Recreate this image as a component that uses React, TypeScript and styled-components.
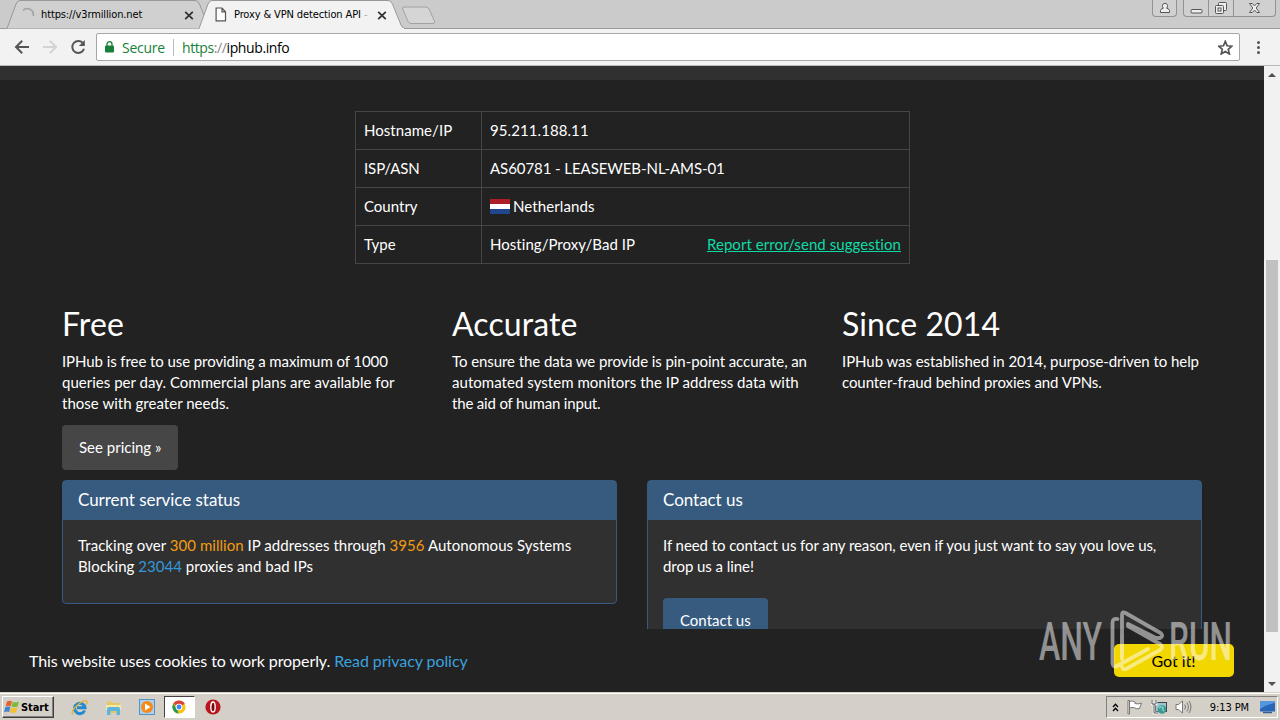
import type { ReactNode } from 'react';
import styled, { createGlobalStyle } from 'styled-components';

const uiFont = "'DejaVu Sans Condensed', 'DejaVu Sans', sans-serif";

const GlobalStyle = createGlobalStyle`
  * {
    box-sizing: border-box;
  }

  body {
    margin: 0;
    overflow: hidden;
  }

  svg {
    display: block;
    flex: none;
  }
`;

const Desktop = styled.div`
  position: relative;
  display: flex;
  flex-direction: column;
  width: 1280px;
  height: 720px;
  overflow: hidden;
  background: #222;
`;

/* browser chrome */

const TabStrip = styled.div`
  display: flex;
  height: 29px;
  padding-left: 7px;
  background: #cbcbcb;
  border-bottom: 1px solid #9b9b9b;
`;

const StyledTab = styled.div<{ $active?: boolean }>`
  position: relative;
  z-index: ${(p) => (p.$active ? 2 : 1)};
  display: flex;
  align-items: center;
  width: ${(p) => (p.$active ? 206 : 200)}px;
  height: 29px;
  margin-right: ${(p) => (p.$active ? -4 : -8)}px;
  padding: 0 ${(p) => (p.$active ? '18px 0 15px' : '13px 0 13px')};
  font: 11px ${uiFont};
  letter-spacing: -0.12px;
  color: #000;

  .shape {
    position: absolute;
    left: 0;
    top: 0;
    z-index: -1;
  }

  .title {
    flex: 1;
    margin-left: 6px;
    overflow: hidden;
    white-space: nowrap;
  }

  .fade {
    color: #aaa;
  }
`;

const NewTab = styled.div`
  padding-top: 6px;
`;

const WindowControls = styled.div`
  display: flex;
  gap: 6px;
  height: 17px;
  margin-left: auto;
  padding-right: 4px;
`;

const ControlGroup = styled.div`
  display: flex;
  border: 1px solid #929292;
  border-top: 0;
  border-radius: 0 0 4px 4px;
  background: #d0d0d0;
`;

const Control = styled.div<{ $width: number }>`
  display: flex;
  align-items: center;
  justify-content: center;
  width: ${(p) => p.$width}px;

  & + & {
    border-left: 1px solid #929292;
  }
`;

const Toolbar = styled.div`
  display: flex;
  align-items: center;
  height: 37px;
  padding: 0 14px;
  background: #f2f2f2;
  border-bottom: 1px solid #b9b9b9;
`;

const NavButtons = styled.div`
  display: flex;
  gap: 12px;
  width: 82px;
`;

const AddressBar = styled.div`
  display: flex;
  align-items: center;
  width: 1144px;
  height: 28px;
  padding: 0 6px 0 8px;
  border: 1px solid #a6a6a6;
  border-radius: 2px;
  background: #fff;
  font: 14px 'Open Sans', sans-serif;
  color: #000;

  .secure {
    width: 52px;
    margin-left: 8px;
    letter-spacing: -0.25px;
    color: #188038;
    border-right: 1px solid #bbb;
    line-height: 17px;
  }

  .url {
    flex: 1;
    margin-left: 8px;
    letter-spacing: -0.4px;
  }

  .scheme {
    color: #188038;
  }

  .slashes {
    color: #888;
  }
`;

const MenuDots = styled.div`
  display: flex;
  flex-direction: column;
  gap: 2px;
  margin-left: 17px;

  i {
    width: 3px;
    height: 3px;
    border-radius: 50%;
    background: #555;
  }
`;

const Viewport = styled.div`
  position: relative;
  display: flex;
  height: 626px;
`;

const Scrollbar = styled.div`
  display: flex;
  flex-direction: column;
  align-items: center;
  width: 16px;
  background: #f1f1f1;

  .arrow {
    display: flex;
    align-items: center;
    height: 17px;
  }

  .thumb {
    width: 12px;
    height: 372px;
    margin: 177px 0 auto;
    background: #c1c1c1;
  }
`;

/* page */

const Page = styled.main`
  width: 1264px;
  overflow: hidden;
  background: #222;
  font: 15px/21px Lato, sans-serif;
  font-variant-ligatures: none;
  color: #fff;
`;

const NavbarEdge = styled.div`
  height: 14px;
  background: #303030;
`;

const InfoTable = styled.table`
  width: 555px;
  margin: 31px 0 0 355px;
  border-collapse: collapse;
  table-layout: fixed;

  td {
    height: 38px;
    padding: 8px;
    border: 1px solid #464646;
  }

  td:first-child {
    width: 126px;
  }

  .value {
    display: flex;
    align-items: center;
  }

  a {
    margin-left: auto;
    color: #0edba6;
    letter-spacing: 0.07px;
    text-decoration: underline;
  }
`;

const Flag = styled.span`
  width: 20px;
  height: 15px;
  margin-right: 3px;
  background: linear-gradient(#ae1c28 33.3%, #fff 33.3% 66.6%, #21468b 66.6%);
`;

const Line = styled.span<{ $tracking?: number }>`
  display: block;
  white-space: nowrap;
  letter-spacing: ${(p) => p.$tracking ?? 0}px;
`;

const Columns = styled.div`
  display: grid;
  grid-template-columns: repeat(3, 360px);
  gap: 30px;
  height: 173px;
  margin: 43px 0 0 62px;
`;

const Feature = styled.section`
  h2 {
    margin: 0 0 11px;
    font-size: 32px;
    font-weight: 400;
    line-height: 33px;
    letter-spacing: 0.1px;
  }

  p {
    margin: 0 0 11px;
  }
`;

const Button = styled.a<{ $primary?: boolean }>`
  display: inline-block;
  height: 45px;
  padding: 12px 17px;
  border-radius: 4px;
  background: ${(p) => (p.$primary ? '#375a7f' : '#464646')};
  white-space: nowrap;
`;

const Panels = styled.div`
  display: grid;
  grid-template-columns: repeat(2, 555px);
  gap: 30px;
  align-items: start;
  margin-left: 62px;
`;

const StyledPanel = styled.section`
  border: 1px solid #375a7f;
  border-radius: 4px;
  background: #303030;

  h3 {
    height: 39px;
    margin: 0;
    padding: 0 15px;
    background: #375a7f;
    font-size: 17px;
    font-weight: 400;
    line-height: 38px;
    letter-spacing: -0.04px;
  }

  .panel-body {
    padding: 15px;
  }

  p {
    margin: 0 0 21px;
  }

  .status {
    margin-bottom: 11px;
  }
`;

const Count = styled.span<{ $tone: 'warning' | 'info' }>`
  color: ${(p) => (p.$tone === 'warning' ? '#f39c12' : '#3498db')};
`;

const CookieBar = styled.div`
  position: absolute;
  left: 0;
  bottom: 0;
  display: flex;
  align-items: center;
  justify-content: space-between;
  width: 1264px;
  height: 63px;
  padding: 0 30px 0 29px;
  background: #222;
  font: 16px/24px Lato, sans-serif;
  font-variant-ligatures: none;
  letter-spacing: -0.07px;
  color: #fff;

  span {
    padding-top: 1px;
  }

  a {
    color: #3ba1de;
  }

  button {
    width: 120px;
    height: 33px;
    padding: 0 1px 0 0;
    border: 0;
    border-radius: 5px;
    background: #f1d600;
    font: inherit;
    color: #000;
  }
`;

const Watermark = styled.svg`
  position: absolute;
  left: 1036px;
  top: 606px;
  z-index: 5;
  overflow: visible;
  font-family: Roboto, sans-serif;
  font-weight: 500;
  pointer-events: none;
`;

/* taskbar */

const Taskbar = styled.footer`
  display: flex;
  align-items: center;
  height: 28px;
  padding: 1px 2px 0;
  border-top: 1px solid #d4d0c8;
  box-shadow: inset 0 1px #fff;
  background: #d4d0c8;
  font: 11px ${uiFont};
  color: #000;
`;

const StartButton = styled.div`
  display: flex;
  align-items: center;
  gap: 1px;
  width: 52px;
  height: 22px;
  padding-left: 1px;
  border: 1px solid;
  border-color: #fff #404040 #404040 #fff;
  box-shadow: inset -1px -1px #808080;
  font-weight: 700;
  letter-spacing: -0.1px;
`;

const QuickLaunch = styled.div`
  display: flex;
  align-items: center;
  margin-left: 9px;
`;

const LaunchItem = styled.div<{ $open?: boolean }>`
  display: flex;
  align-items: center;
  justify-content: center;
  width: ${(p) => (p.$open ? 31 : 33.5)}px;
  height: 22px;
  margin-right: ${(p) => (p.$open ? 2 : 0)}px;
  border: 1px solid;
  border-color: ${(p) => (p.$open ? '#404040 #fff #fff #404040' : 'transparent')};
  background: ${(p) => (p.$open ? '#fff' : 'none')};
`;

const Tray = styled.div`
  display: flex;
  align-items: center;
  gap: 8px;
  width: 172px;
  height: 22px;
  margin-left: auto;
  padding: 0 1px 0 5px;
  border: 1px solid;
  border-color: #808080 #fff #fff #808080;

  .clock {
    margin: 0 2px 0 auto;
    letter-spacing: -0.1px;
  }
`;

const CloseIcon = () => (
  <svg width="10" height="10" viewBox="0 0 10 10" stroke="#333" strokeWidth="1.8">
    <path d="M1.2 1.8 8.8 9.2M8.8 1.8 1.2 9.2" />
  </svg>
);

function Tab(props: { active?: boolean; icon: ReactNode; title: string; faded?: string }) {
  const path = props.active
    ? 'M0 28.5 L9 4 Q10.5 .5 13 .5 H189 Q192 .5 193.5 4 L202 25 Q203.5 28.5 206 28.5'
    : 'M0 28.5 L9 4 Q10.5 .5 13 .5 H188 Q191 .5 192.5 4 L202 28.5';
  return (
    <StyledTab $active={props.active}>
      <svg className="shape" width="207" height="29">
        <path d={path} fill={props.active ? '#f2f2f2' : '#d0d0d0'} stroke="#999" />
        {props.active && <path d="M1 28.5 H205" stroke="#f2f2f2" />}
      </svg>
      {props.icon}
      <span className="title">
        {props.title}
        {props.faded && <span className="fade"> {props.faded}</span>}
      </span>
      <CloseIcon />
    </StyledTab>
  );
}

function Panel(props: { title: string; children: ReactNode }) {
  return (
    <StyledPanel>
      <h3>{props.title}</h3>
      <div className="panel-body">{props.children}</div>
    </StyledPanel>
  );
}

const Spinner = () => (
  <svg width="15" height="15" viewBox="0 0 15 15" fill="none" stroke="#a2a2a2" strokeWidth="1.6">
    <path d="M3 3.5 A6 6 0 0 1 13.2 9" />
  </svg>
);

const PageIcon = () => (
  <svg width="14" height="15" viewBox="-.5 0 14 15" fill="#fff" stroke="#555" strokeWidth="1.2">
    <path d="M1.6 1 H7.5 L11 4.8 V13.8 H1.6Z M7.5 1 V4.8 H11" />
  </svg>
);

function BrowserBar() {
  return (
    <>
      <TabStrip>
        <Tab icon={<Spinner />} title="https://v3rmillion.net" />
        <Tab active icon={<PageIcon />} title="Proxy &amp; VPN detection API" faded="-" />
        <NewTab>
          <svg width="36" height="20" viewBox="0 0 36 20" fill="#d5d5d5" stroke="#a2a2a2">
            <path d="M3 1 H25 Q27 1 28 3 L33.5 15 Q34.3 17.5 32 17.5 H10 Q8 17.5 7 15.5 L1.7 3 Q1 1 3 1Z" />
          </svg>
        </NewTab>
        <WindowControls>
          <ControlGroup>
            <Control $width={23}>
              <svg width="12" height="12" viewBox="0 0 12 12" fill="#eee" stroke="#555">
                <path d="M1.5 10.5 V8.5 Q2 6.5 4.4 6.2 Q3.2 5 3.5 3.3 Q4 1.3 6 1.3 Q8 1.3 8.5 3.3 Q8.8 5 7.6 6.2 Q10 6.5 10.5 8.5 V10.5Z" />
              </svg>
            </Control>
          </ControlGroup>
          <ControlGroup>
            <Control $width={24}>
              <svg width="13" height="12" viewBox="0 0 13 12" fill="#eee" stroke="#555">
                <rect x="1" y="7.5" width="11" height="3.5" rx="1" />
              </svg>
            </Control>
            <Control $width={25}>
              <svg width="14" height="14" viewBox="0 0 14 14" fill="#eee" stroke="#555">
                <rect x="4.5" y="1.5" width="8" height="8" rx="1" />
                <rect x="1.5" y="4.5" width="8" height="8" rx="1" />
                <rect x="4" y="7" width="3" height="3" />
              </svg>
            </Control>
            <Control $width={42}>
              <svg width="13" height="12" viewBox="0 0 13 12" fill="#eee" stroke="#555">
                <path d="M1.5 1.5 H4.3 L6.5 3.9 8.7 1.5 H11.5 L8.2 6 11.5 10.5 H8.7 L6.5 8.1 4.3 10.5 H1.5 L4.8 6Z" />
              </svg>
            </Control>
          </ControlGroup>
        </WindowControls>
      </TabStrip>
      <Toolbar>
        <NavButtons>
          <svg width="16" height="16" viewBox="0 0 16 16" fill="none" stroke="#555" strokeWidth="2">
            <path d="M15 8 H2.5 M8.2 1.8 L2 8 L8.2 14.2" />
          </svg>
          <svg width="16" height="16" viewBox="0 0 16 16" fill="none" stroke="#d3d3d3" strokeWidth="2">
            <path d="M1 8 H13.5 M7.8 1.8 L14 8 L7.8 14.2" />
          </svg>
          <svg width="16" height="16" viewBox="0 0 16 16" fill="none" stroke="#555" strokeWidth="2">
            <path d="M13.2 4.5 A6 6 0 1 0 14 9.8" />
            <path d="M14.8 1 V7 H8.8Z" fill="#555" stroke="none" />
          </svg>
        </NavButtons>
        <AddressBar>
          <svg width="9" height="12" viewBox="0 0 9 12" fill="#188038">
            <rect y="4.5" width="9" height="7" rx="1" />
            <path d="M2 5 V3.2 A2.5 2.5 0 0 1 7 3.2 V5" fill="none" stroke="#188038" strokeWidth="1.3" />
          </svg>
          <span className="secure">Secure</span>
          <span className="url">
            <span className="scheme">https</span>
            <span className="slashes">://</span>iphub.info
          </span>
          <svg width="15" height="15" viewBox="0.7 0 14 14" fill="none" stroke="#555" strokeWidth="1.6">
            <path d="M7.5 1.3 L9.2 5.4 13.6 5.8 10.3 8.7 11.3 13 7.5 10.7 3.7 13 4.7 8.7 1.4 5.8 5.8 5.4Z" />
          </svg>
        </AddressBar>
        <MenuDots>
          <i />
          <i />
          <i />
        </MenuDots>
      </Toolbar>
    </>
  );
}

function IPHubPage() {
  return (
    <Page>
      <NavbarEdge />
      <InfoTable>
        <tbody>
          <tr>
            <td>
              <Line $tracking={0.05}>Hostname/IP</Line>
            </td>
            <td>
              <Line $tracking={0.08}>95.211.188.11</Line>
            </td>
          </tr>
          <tr>
            <td>
              <Line $tracking={-0.1}>ISP/ASN</Line>
            </td>
            <td>
              <Line $tracking={-0.07}>AS60781 - LEASEWEB-NL-AMS-01</Line>
            </td>
          </tr>
          <tr>
            <td>Country</td>
            <td>
              <div className="value">
                <Flag />
                <Line $tracking={0.09}>Netherlands</Line>
              </div>
            </td>
          </tr>
          <tr>
            <td>Type</td>
            <td>
              <div className="value">
                <Line $tracking={0.04}>Hosting/Proxy/Bad IP</Line>
                <a>Report error/send suggestion</a>
              </div>
            </td>
          </tr>
        </tbody>
      </InfoTable>

      <Columns>
        <Feature>
          <h2>Free</h2>
          <p>
            <Line $tracking={-0.08}>IPHub is free to use providing a maximum of 1000</Line>
            <Line $tracking={0.02}>queries per day. Commercial plans are available for</Line>
            <Line $tracking={0.03}>those with greater needs.</Line>
          </p>
          <Button>See pricing »</Button>
        </Feature>
        <Feature>
          <h2>Accurate</h2>
          <p>
            <Line $tracking={-0.07}>To ensure the data we provide is pin-point accurate, an</Line>
            <Line $tracking={0.04}>automated system monitors the IP address data with</Line>
            <Line $tracking={-0.17}>the aid of human input.</Line>
          </p>
        </Feature>
        <Feature>
          <h2>Since 2014</h2>
          <p>
            <Line $tracking={-0.06}>IPHub was established in 2014, purpose-driven to help</Line>
            <Line $tracking={-0.08}>counter-fraud behind proxies and VPNs.</Line>
          </p>
        </Feature>
      </Columns>

      <Panels>
        <Panel title="Current service status">
          <p className="status">
            <Line $tracking={0.045}>
              Tracking over <Count $tone="warning">300 million</Count> IP addresses through{' '}
              <Count $tone="warning">3956</Count> Autonomous Systems
            </Line>
            <Line $tracking={0.03}>
              Blocking <Count $tone="info">23044</Count> proxies and bad IPs
            </Line>
          </p>
        </Panel>
        <Panel title="Contact us">
          <p>
            <Line $tracking={-0.07}>
              If need to contact us for any reason, even if you just want to say you love us,
            </Line>
            <Line $tracking={-0.06}>drop us a line!</Line>
          </p>
          <Button $primary>Contact us</Button>
        </Panel>
      </Panels>
    </Page>
  );
}

function StartBar() {
  return (
    <Taskbar>
      <StartButton>
        <svg width="16" height="16" viewBox="0 0 16 16">
          <path d="M3 2.5 Q5.5 1 8 2.3 L6.7 7.2 Q4.2 6 1.6 7.4Z" fill="#e8602c" />
          <path d="M8.7 2.7 Q11.5 4 15 2.4 L13.7 7.2 Q10.5 8.8 7.4 7.5Z" fill="#7dba3c" />
          <path d="M1.3 8.3 Q4 7 6.4 8.1 L5.1 13 Q2.7 12 0 13.2Z" fill="#3c83d1" />
          <path d="M7.1 8.5 Q10 9.7 13.4 8.2 L12.1 13 Q9 14.6 5.8 13.3Z" fill="#f5bf31" />
        </svg>
        Start
      </StartButton>
      <QuickLaunch>
        <LaunchItem>
          <svg width="17" height="17" viewBox="0 0 17 17" fill="none">
            <path d="M13.6 11.5 A5.2 5.2 0 1 1 14 8.8 H6" stroke="#258bd0" strokeWidth="3" />
            <path d="M2 15.5 Q-.5 13 5 7.5 Q12 .5 15.5 1.8 Q17 3 14.8 5.5" stroke="#e5b52d" strokeWidth="1.3" />
          </svg>
        </LaunchItem>
        <LaunchItem>
          <svg width="17" height="17" viewBox="0 0 17 17">
            <path d="M2 3 L7 2 L8 4 H15 V14 H2Z" fill="#e7c765" />
            <path d="M1 6 H16 V11 H1Z" fill="#f5e7a6" />
            <path d="M2 10 Q2 8 4 8 H13 Q15 8 15 10 V16 H11.5 V12 H5.5 V16 H2Z" fill="#5eb4dc" />
          </svg>
        </LaunchItem>
        <LaunchItem>
          <svg width="16" height="16" viewBox="0 0 16 16">
            <rect x=".5" y=".5" width="15" height="15" fill="#a9d0ee" stroke="#5692c4" />
            <circle cx="8" cy="8" r="6" fill="#f58a18" />
            <path d="M6 4.5 L11.5 8 6 11.5Z" fill="#fff" />
          </svg>
        </LaunchItem>
        <LaunchItem $open>
          <svg width="14" height="14" viewBox="0 0 16 16">
            <circle cx="8" cy="8" r="7.5" fill="#fbc116" />
            <path d="M8 8 L1.5 4.2 A7.5 7.5 0 0 1 14.5 4.2 Z" fill="#dc4437" />
            <path d="M1.5 4.2 L6 11 L7.6 15.5 A7.5 7.5 0 0 1 1.5 4.2Z" fill="#1d9b58" />
            <circle cx="8" cy="8" r="3.8" fill="#fff" />
            <circle cx="8" cy="8" r="2.8" fill="#4285f4" />
          </svg>
        </LaunchItem>
        <LaunchItem>
          <svg width="16" height="16" viewBox="0 0 16 16">
            <circle cx="8" cy="8" r="7.6" fill="#b8151c" />
            <ellipse cx="8" cy="8" rx="2.2" ry="5" fill="#7e090d" stroke="#fff" strokeWidth="1.4" />
          </svg>
        </LaunchItem>
      </QuickLaunch>
      <Tray>
        <svg width="7" height="9" viewBox="0 0 7 9" fill="none" stroke="#000" strokeWidth="1.3">
          <path d="M1 4 L3.5 1.3 6 4M1 8 L3.5 5.3 6 8" />
        </svg>
        <svg width="16" height="16" viewBox="0 0 16 16" fill="#fff" stroke="#777">
          <path d="M2.5 2.5 Q5 1 8 3 V4.5 Q11 5.5 14.5 4.2 L12.5 9.5 Q9.5 10.5 7.5 8.8 Q5 8 2.5 9Z" />
          <path d="M1 1.5 H2.5 V15 H1Z" />
        </svg>
        <svg width="16" height="16" viewBox="0 0 16 16">
          <rect x="4.5" y="3.5" width="11" height="9" fill="#9cc6cf" stroke="#444" />
          <path d="M1 1.5 V5 H5 V1.5 M3 5 V14 H7" fill="none" stroke="#fff" strokeWidth="2.5" />
          <path d="M1 1 V5 H5 V1 M3 5 V14 H7" fill="none" stroke="#555" />
          <circle cx="11" cy="10.5" r="4.3" fill="#389a91" />
          <path d="M8 9 Q10 7 12 8.5 Q11 11 13 12" fill="none" stroke="#98d4cb" strokeWidth="1.2" />
        </svg>
        <svg width="17" height="16" viewBox="0 0 17 16" fill="#fff" stroke="#777">
          <path d="M1 5.5 H3.5 L7.5 2 V14 L3.5 10.5 H1Z" />
          <path d="M9.7 5.5 Q11.5 8 9.7 10.5 M11.8 3.5 Q15 8 11.8 12.5 M14 2 Q18 8 14 14" fill="none" />
        </svg>
        <span className="clock">9:13 PM</span>
        <svg width="17" height="14" viewBox="0 0 17 14">
          <rect x="1" y="1" width="15" height="10.5" fill="#2766b9" />
          <path d="M1 1 H16 V3 Q9 4 1 9Z" fill="#5597dc" />
          <path d="M4 12.5 H13" stroke="#355f92" strokeWidth="1.5" />
        </svg>
      </Tray>
    </Taskbar>
  );
}

export default function App() {
  return (
    <Desktop>
      <GlobalStyle />
      <BrowserBar />
      <Viewport>
        <IPHubPage />
        <Scrollbar>
          <div className="arrow">
            <svg width="8" height="4" viewBox="0 0 8 4" fill="#505050">
              <path d="M0 4 L4 0 8 4Z" />
            </svg>
          </div>
          <div className="thumb" />
          <div className="arrow">
            <svg width="8" height="4" viewBox="0 0 8 4" fill="#505050">
              <path d="M0 0 L4 4 8 0Z" />
            </svg>
          </div>
        </Scrollbar>
        <CookieBar>
          <span>
            This website uses cookies to work properly. <a>Read privacy policy</a>
          </span>
          <button>Got it!</button>
        </CookieBar>
      </Viewport>
      <StartBar />
      <Watermark width="200" height="70" viewBox="0 0 200 70" fill="#fff" opacity="0.5">
        <text x="3" y="53.5" fontSize="53" textLength="63" lengthAdjust="spacingAndGlyphs">
          ANY
        </text>
        <text x="133" y="53.5" fontSize="53" textLength="63" lengthAdjust="spacingAndGlyphs">
          RUN
        </text>
        <g fill="none" stroke="#fff" strokeWidth="3.8" strokeLinecap="round" strokeLinejoin="round">
          <path d="M81.5 13 Q76.5 12 76.5 17 V57 Q77 62 81 60 L112 43" />
          <path d="M86 53 V9 Q86 5 89.5 7 L124.5 27 Q128 30 124 32 L120 32 L92 18" />
          <path d="M86 29 V51 M92 20 L124 38 Q128 41 124 44 L90 63 Q87 64 86 61" />
        </g>
      </Watermark>
    </Desktop>
  );
}
